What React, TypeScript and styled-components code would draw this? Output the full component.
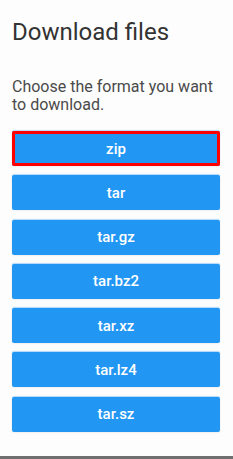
import * as React from "react"
import styled, { createGlobalStyle } from "styled-components"

const GlobalStyle = createGlobalStyle`
  html, body {
    margin: 0;
    padding: 0;
    background: #fdfdfd;
  }
  * {
    box-sizing: border-box;
  }
`

const Panel = styled.div`
  width: 233px;
  height: 459px;
  display: flex;
  flex-direction: column;
  padding: 18px 13px 0 12px;
  background: #fdfdfd;
  border-bottom: 3px solid #6f6f6f;
  font-family: Roboto, "Liberation Sans", sans-serif;
`

const Title = styled.h2`
  margin: 0;
  font-size: 24px;
  font-weight: 400;
  line-height: 28px;
  color: #333333;
`

const Lead = styled.p`
  margin: 32px 0 0;
  font-size: 16px;
  line-height: 18px;
  color: #4a4a4a;
`

const List = styled.div`
  display: flex;
  flex-direction: column;
  gap: 9.3px;
  margin-top: 17px;
`

const FormatButton = styled.button<{ $focused?: boolean }>`
  height: 35px;
  width: 100%;
  border: none;
  border-radius: 2px;
  background: #2196f3;
  color: #ffffff;
  font-family: Roboto, "Liberation Sans", sans-serif;
  font-size: 15px;
  font-weight: 500;
  cursor: pointer;
  box-shadow: 0 -1px 1px rgba(33, 150, 243, 0.35), 0 1px 2px rgba(0, 0, 0, 0.06);
  outline: ${(p) => (p.$focused ? "3px solid #ff0000" : "none")};
  outline-offset: -3px;
`

const formats = ["zip", "tar", "tar.gz", "tar.bz2", "tar.xz", "tar.lz4", "tar.sz"]

const App = () => {
  return (
    <>
      <GlobalStyle />
      <Panel>
        <Title>Download files</Title>
        <Lead>Choose the format you want to download.</Lead>
        <List>
          {formats.map((f, i) => (
            <FormatButton key={f} $focused={i === 0}>
              {f}
            </FormatButton>
          ))}
        </List>
      </Panel>
    </>
  )
}

export default App
